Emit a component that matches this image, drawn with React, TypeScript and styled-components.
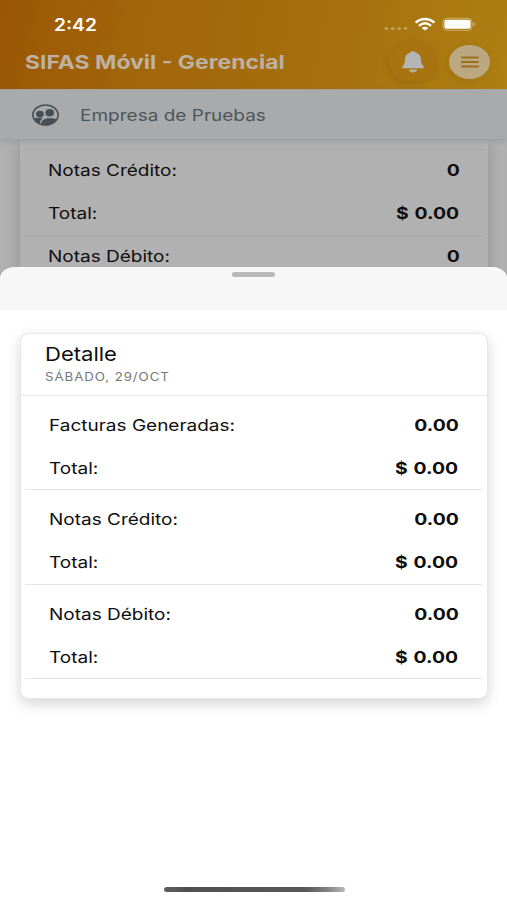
import React from 'react';
import styled, { createGlobalStyle } from 'styled-components';

const Global = createGlobalStyle`
  * { box-sizing: border-box; }
  body { margin: 0; background: #fff; font-family: Inter, "Liberation Sans", sans-serif; }
`;

const Screen = styled.div`
  position: relative;
  width: 507px;
  height: 900px;
  overflow: hidden;
  background: #b0b0b0;
`;

const Text = styled.span<{ $size: number; $weight?: number; $wide: number; $color?: string; $spacing?: number; $end?: boolean }>`
  display: block;
  white-space: nowrap;
  line-height: 20px;
  font-size: ${p => p.$size}px;
  font-weight: ${p => p.$weight ?? 400};
  color: ${p => p.$color ?? '#0e0e0e'};
  letter-spacing: ${p => p.$spacing ?? 0}px;
  word-spacing: ${p => (p.$end ? 1 : 0)}px;
  transform: scaleX(${p => p.$wide});
  transform-origin: ${p => (p.$end ? 'right' : 'left')} center;
`;

const Header = styled.header`
  height: 89px;
  padding-top: 15px;
  background: linear-gradient(100deg, #9b5603 0%, #a1660a 28%, #a56e0c 60%, #ad8013 100%);
`;

const StatusBar = styled.div`
  height: 20px;
  display: flex;
  align-items: center;
  justify-content: space-between;
  padding: 0 30px 0 54px;
`;

const StatusIcons = styled.svg`
  display: block;
  width: 94px;
  height: 18px;
`;

const TitleBar = styled.div`
  height: 54px;
  display: flex;
  align-items: center;
  justify-content: space-between;
  padding: 0 17px 0 25px;
`;

const Title = styled.div`
  padding-top: 2px;
`;

const Actions = styled.div`
  display: flex;
  align-items: center;
  gap: 12px;
`;

const RoundButton = styled.button<{ $filled?: boolean }>`
  display: flex;
  align-items: center;
  justify-content: center;
  padding: 0;
  border: 0;
  width: ${p => (p.$filled ? 41 : 48)}px;
  height: ${p => (p.$filled ? 34 : 40)}px;
  border-radius: 50%;
  background: ${p => (p.$filled ? '#bba880' : '#a7740f')};
  box-shadow: ${p => (p.$filled ? '0 2px 8px rgba(60, 40, 0, 0.1)' : '-1px 2px 7px rgba(70, 40, 0, 0.13)')};
`;

const Company = styled.div`
  position: relative;
  height: 51px;
  display: flex;
  align-items: center;
  gap: 21px;
  padding: 1px 0 0 32px;
  background: #a8aaac;
  border-top: 1px solid #a5a19b;
  border-bottom: 1px solid #9fa1a3;
  box-shadow: 0 2px 5px rgba(0, 0, 0, 0.09);
`;

const Summary = styled.section`
  margin: 0 19px 0 20px;
  height: 160px;
  padding: 9px 4px 0;
  background: #b1b1b1;
  box-shadow: 0 3px 13px rgba(0, 0, 0, 0.18);
`;

const SummaryGroup = styled.div`
  height: 86px;
  border-top: 1px solid #a7a7a7;
`;

const Row = styled.div<{ $inset?: boolean }>`
  display: flex;
  align-items: center;
  justify-content: space-between;
  height: 43px;
  padding: 0 ${p => (p.$inset ? 23.5 : 24.5)}px ${p => (p.$inset ? 2 : 3)}px 24px;
`;

const Sheet = styled.main`
  position: absolute;
  left: 0;
  right: 0;
  top: 267px;
  bottom: 0;
  overflow: hidden;
  background: #fff;
  border-radius: 15px 15px 0 0 / 12px 12px 0 0;
  display: flex;
  flex-direction: column;
`;

const SheetTop = styled.div`
  height: 43px;
  flex: none;
  padding-top: 5px;
  background: #f7f7f7;
`;

const Handle = styled.div`
  width: 43px;
  height: 5px;
  margin-left: 232px;
  border-radius: 3px;
  background: #b9b9ba;
`;

const Card = styled.section`
  flex: none;
  margin: 23px 19px 0 20px;
  height: 366px;
  border: 1px solid #e5e8e8;
  border-radius: 9px 9px 10px 10px / 8px;
  background: #fff;
  box-shadow: 0 5px 14px rgba(0, 0, 0, 0.17);
`;

const CardHeader = styled.div`
  height: 62px;
  padding: 11px 24px 0;
  border-bottom: 1px solid #e5e9e9;
`;

const CardTitle = styled.div`
  height: 22px;
`;

const DetailGroup = styled.div`
  height: 94.4px;
  padding-top: 8.4px;
  margin: 0 5px 0 4px;
  border-bottom: 1px solid #e4e6e6;
`;

const Spacer = styled.div`
  flex: 1;
`;

const HomeBar = styled.div`
  flex: none;
  width: 181px;
  height: 5px;
  margin: 0 0 8px 164px;
  border-radius: 3px;
  background: linear-gradient(90deg, #606060, #505050 12%, #595959 78%, #808080 90%, #b8b8b8);
`;

const Drawing = styled.svg`
  display: block;
  overflow: visible;
`;

const PeopleIcon = () => (
  <Drawing width="27" height="22" viewBox="0 0 27 22">
    <ellipse cx="13.5" cy="11" rx="12.6" ry="10" fill="none" stroke="#484e51" strokeWidth="1.6" />
    <ellipse cx="7.9" cy="10.1" rx="3.9" ry="3.4" fill="#484e51" />
    <ellipse cx="17.7" cy="8.8" rx="4.3" ry="3.8" fill="#484e51" />
    <path d="M1.7 14.4c2-.7 5.3-.7 9-.2-1.8 1.3-2.6 2.8-2.7 5-2.8-.8-5.4-2.5-6.3-4.8Z" fill="#484e51" />
    <path d="M9 19.5c1-3.8 4-5.4 8.8-5.3 3.1 0 5.6.5 7.7 1.1-2 3.7-6.3 5.9-11.8 5.9-1.8 0-3.4-.5-4.7-1.7Z" fill="#484e51" />
  </Drawing>
);

const BellIcon = () => (
  <Drawing width="24" height="22" viewBox="0 0 24 22">
    <path d="M12 .2c-1.4 0-2.1.6-2.4 1.4C6.2 2.4 4.3 4.8 4.1 8c-.2 3.8-.8 5.4-2.4 7.1-.9 1-.8 2.2.8 2.2h19c1.6 0 1.7-1.2.8-2.2-1.6-1.7-2.2-3.3-2.4-7.1-.2-3.2-2.1-5.6-5.5-6.4C14.1.8 13.4.2 12 .2Z" fill="#b5b5b7" />
    <path d="M7.8 18.4h8.4c-.4 2-2 3-4.2 3s-3.8-1-4.2-3Z" fill="#b5b0a2" />
  </Drawing>
);

const MenuIcon = () => (
  <Drawing width="18" height="12" viewBox="0 0 18 12">
    <path d="M1 1.5h16M1 6h16M1 10.5h16" stroke="#9d6d20" strokeWidth="2" strokeLinecap="round" />
  </Drawing>
);

const PhoneStatus = () => (
  <StatusIcons viewBox="0 0 94 18">
    <g fill="#c4a15a">
      <ellipse cx="3.3" cy="12.6" rx="1.9" ry="1.5" />
      <ellipse cx="9.7" cy="12.6" rx="1.9" ry="1.5" />
      <ellipse cx="16.1" cy="12.6" rx="1.9" ry="1.5" />
      <ellipse cx="22.5" cy="12.6" rx="1.9" ry="1.5" />
    </g>
    <g fill="none" stroke="#fff" strokeWidth="2.4">
      <path d="M32.6 6.7c5.6-5 13.2-5 18.8 0" />
      <path d="M36 9.8c3.7-3.1 8.3-3.1 12 0" />
    </g>
    <path d="M38.6 11.9c2-1.5 4.8-1.5 6.8 0L42 14.6Z" fill="#fff" />
    <rect x="60" y="2.3" width="29" height="12" rx="3.6" fill="none" stroke="#cfb06d" />
    <rect x="61.4" y="3.8" width="26.2" height="9" rx="1.8" fill="#fff" />
    <path d="M90.5 6.2c2.2.8 2.2 3.4 0 4.2Z" fill="#cfb06d" />
  </StatusIcons>
);

const details = ['Facturas Generadas:', 'Notas Crédito:', 'Notas Débito:'];

const Entry = ({ name, value, inset }: { name: string; value: string; inset?: boolean }) => (
  <Row $inset={inset}>
    <Text $size={16} $wide={1.187}>{name}</Text>
    <Text $size={16} $weight={700} $wide={1.21} $end>{value}</Text>
  </Row>
);

export default function App() {
  return (
    <Screen>
      <Global />
      <Header>
        <StatusBar>
          <Text $size={17} $weight={600} $wide={1.13} $color="#fff">2:42</Text>
          <PhoneStatus />
        </StatusBar>
        <TitleBar>
          <Title>
            <Text $size={19} $weight={700} $wide={1.207} $color="#bcb2a3">SIFAS Móvil - Gerencial</Text>
          </Title>
          <Actions>
            <RoundButton aria-label="Notificaciones"><BellIcon /></RoundButton>
            <RoundButton $filled aria-label="Menú"><MenuIcon /></RoundButton>
          </Actions>
        </TitleBar>
      </Header>
      <Company>
        <PeopleIcon />
        <Text $size={16.5} $wide={1.152} $color="#4f5558">Empresa de Pruebas</Text>
      </Company>
      <Summary>
        <SummaryGroup>
          <Entry name="Notas Crédito:" value="0" />
          <Entry name="Total:" value="$ 0.00" />
        </SummaryGroup>
        <SummaryGroup>
          <Entry name="Notas Débito:" value="0" />
        </SummaryGroup>
      </Summary>
      <Sheet>
        <SheetTop><Handle /></SheetTop>
        <Card>
          <CardHeader>
            <CardTitle><Text $size={19} $wide={1.16}>Detalle</Text></CardTitle>
            <Text $size={11.5} $wide={1.155} $color="#777" $spacing={0.8}>SÁBADO, 29/OCT</Text>
          </CardHeader>
          {details.map((name) => (
            <DetailGroup key={name}>
              <Entry inset name={name} value="0.00" />
              <Entry inset name="Total:" value="$ 0.00" />
            </DetailGroup>
          ))}
        </Card>
        <Spacer />
        <HomeBar />
      </Sheet>
    </Screen>
  );
}
